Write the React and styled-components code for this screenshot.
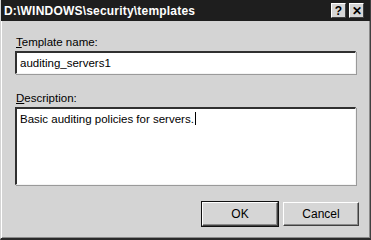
import React from "react";
import styled, { createGlobalStyle } from "styled-components";

const GlobalStyle = createGlobalStyle`
  html, body {
    margin: 0;
    padding: 0;
    background: #d4d4d4;
  }
`;

const Window = styled.div`
  width: 371px;
  height: 240px;
  box-sizing: border-box;
  display: flex;
  flex-direction: column;
  background: #d4d4d4;
  border-left: 1px solid #d4d4d4;
  border-right: 1px solid #404040;
  border-bottom: 2px solid #2a2a2a;
  box-shadow: inset 1px 0 0 #ffffff, inset -1px -1px 0 #8a8a8a;
  font-family: "Liberation Sans", Arial, sans-serif;
`;

const TitleBar = styled.div`
  height: 21px;
  flex: none;
  display: flex;
  align-items: center;
  justify-content: space-between;
  background: #1e1e1e;
  padding: 0 6px 0 3px;
`;

const Title = styled.span`
  color: #ffffff;
  font-weight: bold;
  font-size: 12px;
  letter-spacing: 0.2px;
`;

const Controls = styled.div`
  display: flex;
  gap: 3px;
`;

const CtrlButton = styled.div`
  width: 15px;
  height: 15px;
  box-sizing: border-box;
  background: #d6d6d6;
  border: 1px solid;
  border-color: #ffffff #404040 #404040 #ffffff;
  display: flex;
  align-items: center;
  justify-content: center;
  color: #000;
  font-weight: bold;
  font-size: 12px;
  line-height: 1;
`;

const Body = styled.div`
  flex: 1;
  display: flex;
  flex-direction: column;
  padding: 14px 14px 0 14px;
`;

const Label = styled.div`
  font-size: 11.5px;
  line-height: 14px;
  color: #000;
  margin-left: 1px;
  margin-top: ${(p) => p.$top || 0}px;
`;

const Field = styled.div`
  margin-top: ${(p) => p.$top || 0}px;
  height: ${(p) => p.$h}px;
  box-sizing: border-box;
  background: #ffffff;
  border-top: 2px solid #303030;
  border-left: 2px solid #303030;
  border-right: 1px solid #f4f4f4;
  border-bottom: 1px solid #f4f4f4;
  box-shadow: 1px 1px 0 #9a9a9a;
  padding: 3px 3px;
  font-size: 11.5px;
  line-height: 14px;
  color: #000;
`;

const Caret = styled.span`
  display: inline-block;
  width: 1px;
  height: 13px;
  background: #000;
  vertical-align: -2px;
  margin-left: 1px;
`;

const Footer = styled.div`
  display: flex;
  justify-content: flex-end;
  gap: 5px;
  margin-top: 17px;
  margin-right: -3px;
`;

const Button = styled.div`
  width: 76px;
  height: 24px;
  box-sizing: border-box;
  display: flex;
  align-items: center;
  justify-content: center;
  font-size: 12px;
  color: #000;
  background: #d6d6d6;
  border: 1px solid;
  border-color: #ffffff #404040 #404040 #ffffff;
  box-shadow: ${(p) =>
    p.$default
      ? "0 0 0 1px #111, inset -1px -1px 0 #8a8a8a"
      : "inset -1px -1px 0 #8a8a8a"};
`;

export default function App() {
  return (
    <>
      <GlobalStyle />
      <Window>
        <TitleBar>
          <Title>D:\WINDOWS\security\templates</Title>
          <Controls>
            <CtrlButton>?</CtrlButton>
            <CtrlButton>✕</CtrlButton>
          </Controls>
        </TitleBar>
        <Body>
          <Label>
            <u>T</u>emplate name:
          </Label>
          <Field $top={2} $h={23}>
            auditing_servers1
          </Field>
          <Label $top={17}>
            <u>D</u>escription:
          </Label>
          <Field $top={2} $h={78}>
            Basic auditing policies for servers.
            <Caret />
          </Field>
          <Footer>
            <Button $default>OK</Button>
            <Button>Cancel</Button>
          </Footer>
        </Body>
      </Window>
    </>
  );
}
